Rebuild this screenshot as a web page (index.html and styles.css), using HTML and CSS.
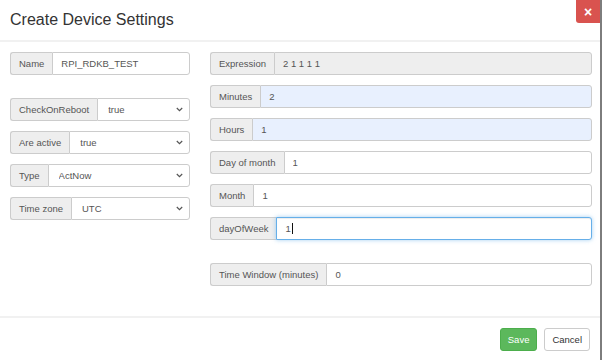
FILE: index.html
```html
<!DOCTYPE html>
<html lang="en">
<head>
    <meta charset="UTF-8">
    <meta name="viewport" content="width=device-width, initial-scale=1.0">
    <title>Create Device Settings</title>
    <link rel="stylesheet" href="styles.css">
</head>
<body>
    <div class="modal">
      <div class="modal-header">
        <h3 class="modal-title">Create Device Settings</h3>
        <button class="close" type="button">&times;</button>
      </div>

      <div class="modal-body">
        <div class="col col-left">
          <div class="input-group">
            <span class="addon">Name</span>
            <input class="control" type="text" value="RPI_RDKB_TEST">
          </div>
          <div class="input-group spaced">
            <span class="addon">CheckOnReboot</span>
            <div class="select-wrap">
              <select class="control"><option>true</option><option>false</option></select>
              <svg class="chevron" width="7" height="5" viewBox="0 0 7 5"><path d="M0.8 1 L3.5 3.7 L6.2 1" fill="none" stroke="#555" stroke-width="1.2"/></svg>
            </div>
          </div>
          <div class="input-group">
            <span class="addon">Are active</span>
            <div class="select-wrap">
              <select class="control"><option>true</option><option>false</option></select>
              <svg class="chevron" width="7" height="5" viewBox="0 0 7 5"><path d="M0.8 1 L3.5 3.7 L6.2 1" fill="none" stroke="#555" stroke-width="1.2"/></svg>
            </div>
          </div>
          <div class="input-group">
            <span class="addon">Type</span>
            <div class="select-wrap">
              <select class="control"><option>ActNow</option></select>
              <svg class="chevron" width="7" height="5" viewBox="0 0 7 5"><path d="M0.8 1 L3.5 3.7 L6.2 1" fill="none" stroke="#555" stroke-width="1.2"/></svg>
            </div>
          </div>
          <div class="input-group">
            <span class="addon">Time zone</span>
            <div class="select-wrap">
              <select class="control"><option>UTC</option></select>
              <svg class="chevron" width="7" height="5" viewBox="0 0 7 5"><path d="M0.8 1 L3.5 3.7 L6.2 1" fill="none" stroke="#555" stroke-width="1.2"/></svg>
            </div>
          </div>
        </div>

        <div class="col col-right">
          <div class="input-group">
            <span class="addon">Expression</span>
            <input class="control" type="text" value="2 1 1 1 1" disabled>
          </div>
          <div class="input-group">
            <span class="addon">Minutes</span>
            <input class="control autofill" type="text" value="2">
          </div>
          <div class="input-group">
            <span class="addon">Hours</span>
            <input class="control autofill" type="text" value="1">
          </div>
          <div class="input-group">
            <span class="addon">Day of month</span>
            <input class="control" type="text" value="1">
          </div>
          <div class="input-group">
            <span class="addon">Month</span>
            <input class="control" type="text" value="1">
          </div>
          <div class="input-group">
            <span class="addon">dayOfWeek</span>
            <div class="control focused">1<span class="caret"></span></div>
          </div>
          <div class="input-group spaced">
            <span class="addon">Time Window (minutes)</span>
            <input class="control" type="text" value="0">
          </div>
        </div>
      </div>

      <div class="modal-footer">
        <button class="btn btn-success" type="button">Save</button>
        <button class="btn btn-default" type="button">Cancel</button>
      </div>
    </div>
</body>
</html>
```

FILE: styles.css
```css
* {
    box-sizing: border-box;
}

body {
    margin: 0;
    font-family: "Liberation Sans", Arial, sans-serif;
    font-size: 9.5px;
    color: #333;
    background: #fff;
}

.modal {
    width: 602px;
    height: 360px;
    border-right: 2px solid #7d7d7d;
    display: flex;
    flex-flow: column nowrap;
}

.modal-header {
    display: flex;
    justify-content: space-between;
    align-items: flex-start;
    height: 42px;
    border-bottom: 2px solid #f1f1f1;
}

.modal-title {
    margin: 0;
    padding: 11px 0 0 10px;
    font-size: 16px;
    font-weight: normal;
    line-height: 18px;
    color: #333;
}

.close {
    width: 24px;
    height: 23px;
    padding: 0;
    border: none;
    border-radius: 0 0 0 3px;
    background: #d9534f;
    color: #fff;
    font-family: "Liberation Sans", Arial, sans-serif;
    font-size: 14px;
    font-weight: bold;
    line-height: 20px;
}

.modal-body {
    display: flex;
    gap: 20px;
    height: 274px;
    padding: 10px 8px 0 10px;
}

.col {
    display: flex;
    flex-flow: column nowrap;
    gap: 10px;
}

.col-left {
    width: 180px;
}

.col-right {
    flex: 1;
}

.input-group {
    display: flex;
    height: 23px;
}

.input-group.spaced {
    margin-top: 13px;
}

.addon {
    display: flex;
    align-items: center;
    padding: 0 8px;
    background: #eee;
    border: 1px solid #ccc;
    border-right: none;
    border-radius: 3px 0 0 3px;
    color: #555;
    white-space: nowrap;
}

.control {
    flex: 1;
    min-width: 0;
    height: 23px;
    margin: 0;
    padding: 0 8px;
    border: 1px solid #ccc;
    border-radius: 0 3px 3px 0;
    background: #fff;
    color: #555;
    font-family: inherit;
    font-size: 9.5px;
    outline: none;
}

.control:disabled {
    background: #eee;
}

.control.autofill {
    background: #e8f0fe;
}

.control.focused {
    display: flex;
    align-items: center;
    border-color: #66afe9;
    box-shadow: inset 0 1px 1px rgba(0, 0, 0, .075), 0 0 4px rgba(102, 175, 233, .6);
}

.caret {
    display: inline-block;
    width: 1px;
    height: 11px;
    margin-left: 1px;
    background: #111;
}

.select-wrap {
    flex: 1;
    display: flex;
    position: relative;
}

.select-wrap select {
    appearance: none;
    -webkit-appearance: none;
    padding-left: 10px;
}

.chevron {
    position: absolute;
    right: 7px;
    top: 9px;
    pointer-events: none;
}

.modal-footer {
    display: flex;
    justify-content: flex-end;
    gap: 7px;
    padding: 10px 10px 0 0;
    border-top: 2px solid #f1f1f1;
}

.btn {
    height: 23px;
    padding: 0 7px;
    border: 1px solid #ccc;
    border-radius: 3px;
    font-family: inherit;
    font-size: 9.5px;
}

.btn-success {
    background: #5cb85c;
    border-color: #4cae4c;
    color: #fff;
}

.btn-default {
    background: #fff;
    color: #333;
}
```
